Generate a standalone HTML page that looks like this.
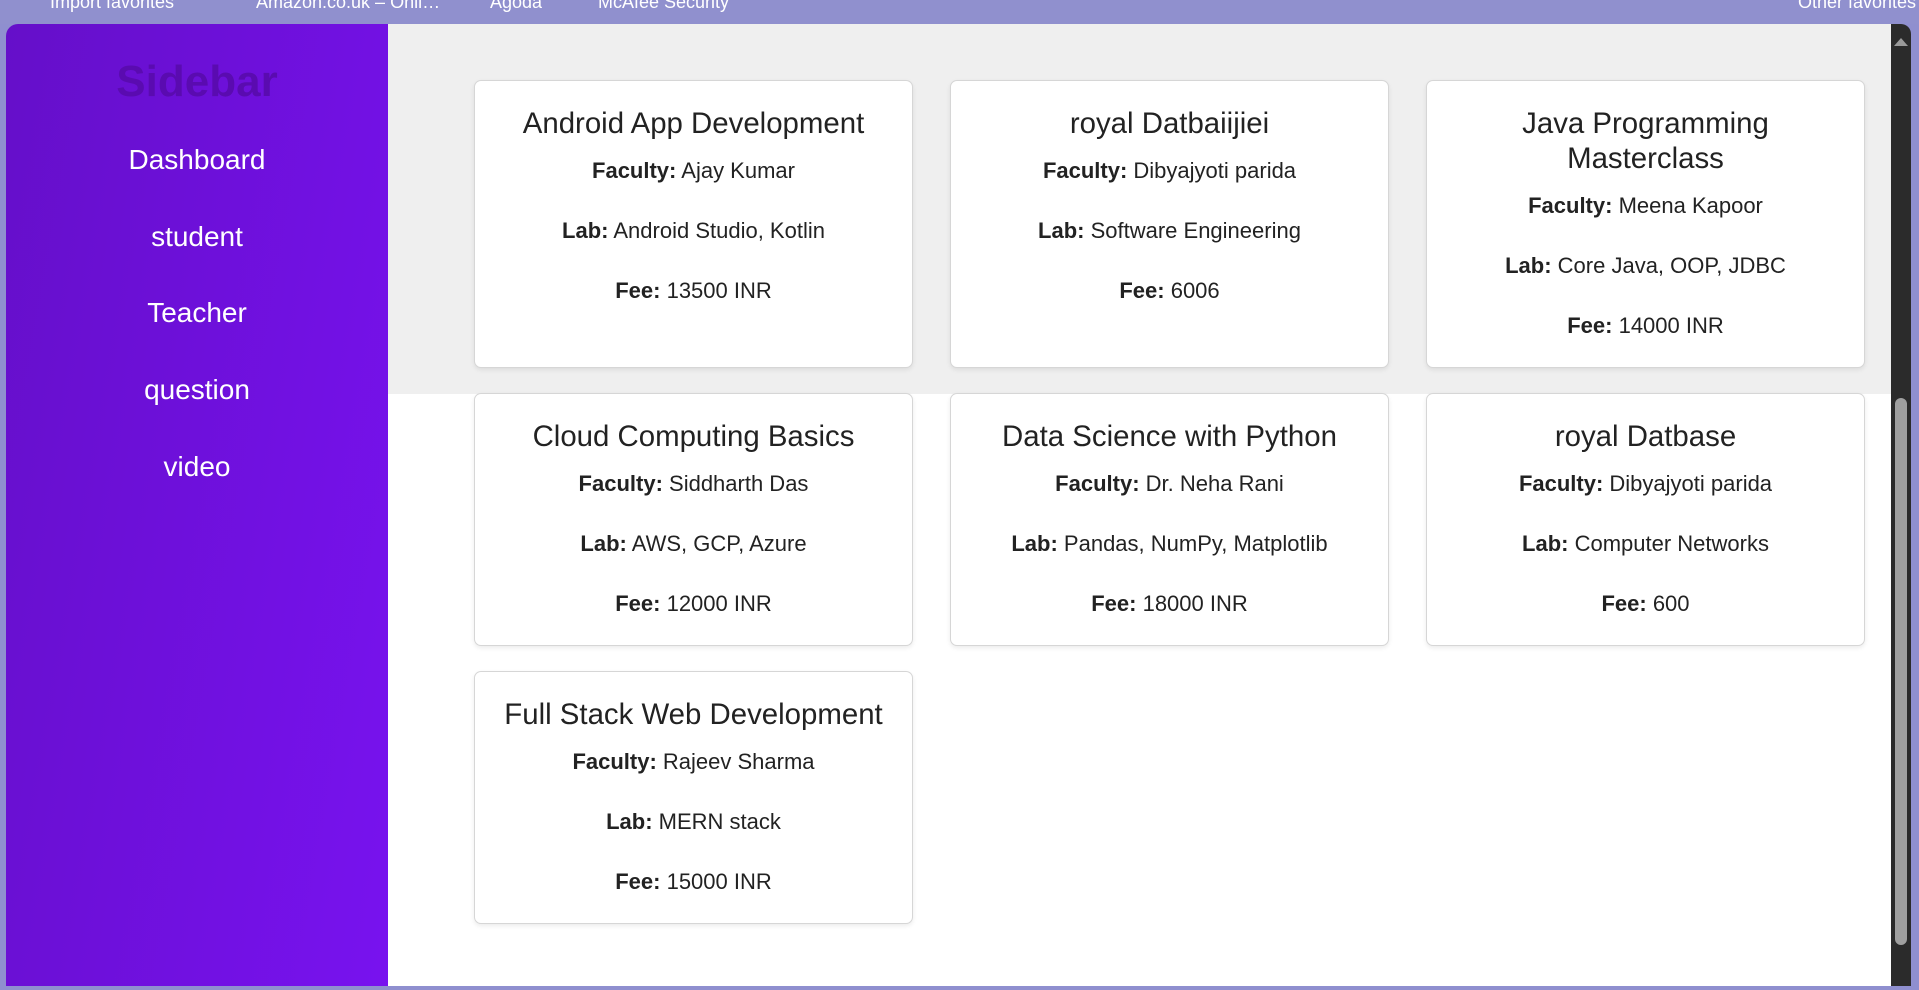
<!DOCTYPE html>
<html><head><meta charset="utf-8"><style>
*{margin:0;padding:0;box-sizing:border-box}
body{width:1919px;height:990px;overflow:hidden;background:#8f8fcf;font-family:"Liberation Sans",Arial,sans-serif;position:relative}
.top{position:absolute;left:0;top:0;width:1919px;height:24px;background:#9090ce;color:#fff;font-size:18px}
.top span{position:absolute;top:-8px}
.side{position:absolute;left:6px;top:24px;width:382px;height:962px;border-top-left-radius:12px;background:linear-gradient(100deg,#650fc9,#7812ef)}
.side h2{position:absolute;top:33px;width:100%;text-align:center;font-size:44px;color:#5a0bb0;font-weight:bold}
.side a{position:absolute;width:100%;text-align:center;color:#fff;font-size:28px;text-decoration:none}
.main{position:absolute;left:388px;top:24px;width:1503px;height:962px;background:#fff}
.grey{position:absolute;left:0;top:0;width:1503px;height:370px;background:#efefef}
.sb{position:absolute;left:1891px;top:24px;width:20px;height:962px;background:#2b2b2b;border-top-right-radius:10px}
.thumb{position:absolute;left:4px;top:374px;width:12px;height:547px;background:#a0a0a0;border-radius:6px}
.card{position:absolute;width:439px;background:#fff;border:1px solid #d6d6d6;border-radius:7px;box-shadow:0 2px 5px rgba(0,0,0,.08);text-align:center;color:#222}
.card h3{font-weight:normal;font-size:29.4px;line-height:35px;margin-top:25px;padding:0 20px}
.card p{font-size:22px;line-height:26px;margin-top:34px}
.card h3+p{margin-top:17px}
</style></head><body>
<div class="top"><span style="left:50px">Import favorites</span><span style="left:256px">Amazon.co.uk – Onli…</span><span style="left:490px">Agoda</span><span style="left:598px">McAfee Security</span><span style="left:1798px">Other favorites</span></div>
<div class="side"><h2>Sidebar</h2>
<a style="top:120px">Dashboard</a><a style="top:197px">student</a><a style="top:273px">Teacher</a><a style="top:350px">question</a><a style="top:427px">video</a></div>
<div class="main"><div class="grey"></div></div>
<div class="sb"><div style="position:absolute;left:3px;top:14px;border:7px solid transparent;border-bottom:8px solid #9a9a9a;border-top:0"></div><div class="thumb"></div></div>

<div class="card" style="left:474px;top:80px;height:288px"><h3>Android App Development</h3><p><b>Faculty:</b> Ajay Kumar</p><p><b>Lab:</b> Android Studio, Kotlin</p><p><b>Fee:</b> 13500 INR</p></div>
<div class="card" style="left:950px;top:80px;height:288px"><h3>royal Datbaiijiei</h3><p><b>Faculty:</b> Dibyajyoti parida</p><p><b>Lab:</b> Software Engineering</p><p><b>Fee:</b> 6006</p></div>
<div class="card" style="left:1426px;top:80px;height:288px"><h3>Java Programming Masterclass</h3><p><b>Faculty:</b> Meena Kapoor</p><p><b>Lab:</b> Core Java, OOP, JDBC</p><p><b>Fee:</b> 14000 INR</p></div>

<div class="card" style="left:474px;top:393px;height:253px"><h3>Cloud Computing Basics</h3><p><b>Faculty:</b> Siddharth Das</p><p><b>Lab:</b> AWS, GCP, Azure</p><p><b>Fee:</b> 12000 INR</p></div>
<div class="card" style="left:950px;top:393px;height:253px"><h3>Data Science with Python</h3><p><b>Faculty:</b> Dr. Neha Rani</p><p><b>Lab:</b> Pandas, NumPy, Matplotlib</p><p><b>Fee:</b> 18000 INR</p></div>
<div class="card" style="left:1426px;top:393px;height:253px"><h3>royal Datbase</h3><p><b>Faculty:</b> Dibyajyoti parida</p><p><b>Lab:</b> Computer Networks</p><p><b>Fee:</b> 600</p></div>

<div class="card" style="left:474px;top:671px;height:253px"><h3>Full Stack Web Development</h3><p><b>Faculty:</b> Rajeev Sharma</p><p><b>Lab:</b> MERN stack</p><p><b>Fee:</b> 15000 INR</p></div>
</body></html>
